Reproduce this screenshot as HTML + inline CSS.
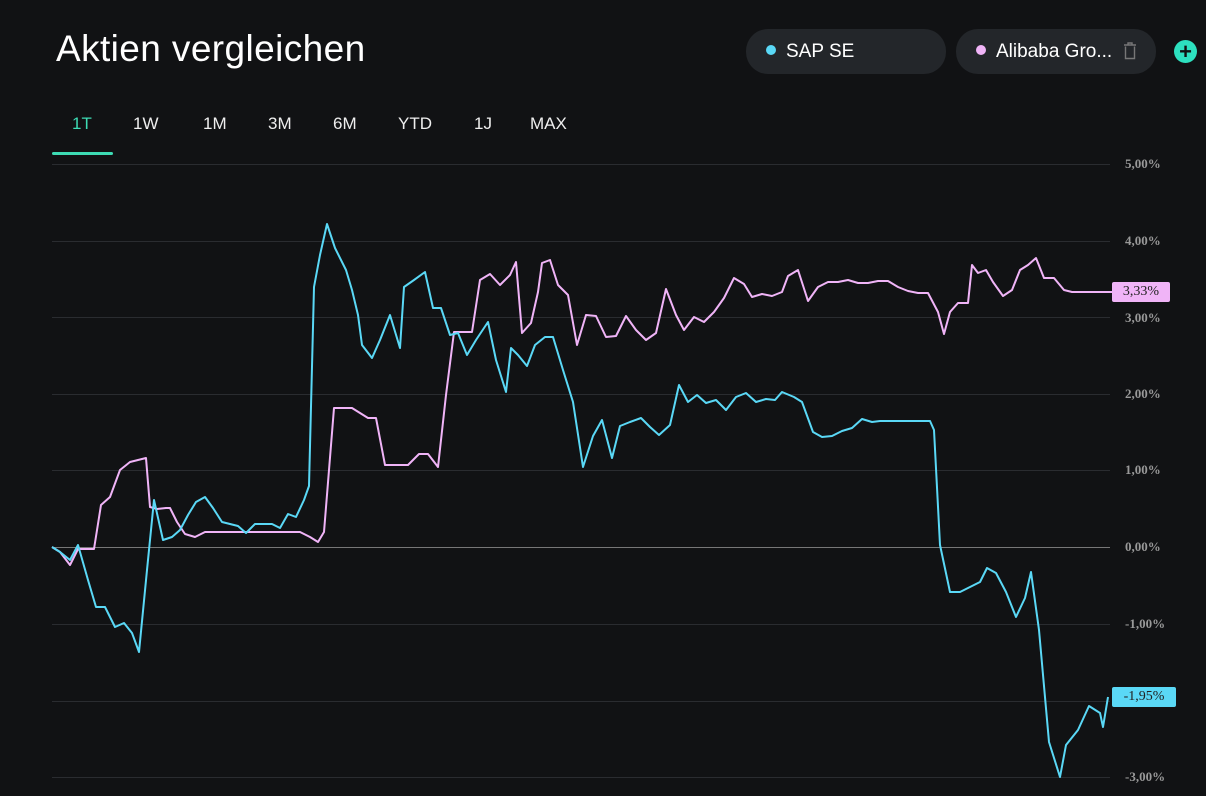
<!DOCTYPE html><html><head><meta charset="utf-8"><style>
body{margin:0;width:1206px;height:796px;background:#111214;overflow:hidden;font-family:"Liberation Sans",sans-serif;color:#fff;position:relative}
.t{position:absolute;left:56px;top:28px;font-size:37px;letter-spacing:0.4px}
.pill{position:absolute;top:29px;height:45px;border-radius:22px;background:#23262a;font-size:19px;line-height:45px}
.dot{display:inline-block;width:10px;height:10px;border-radius:50%;vertical-align:middle;margin:0 10px 3px 20px}
.tab{position:absolute;top:114px;font-size:17px;color:#eee}
.yl{position:absolute;left:1125px;font-family:"Liberation Serif",serif;font-size:13px;color:#999;font-weight:bold}
</style></head><body>
<div class="t">Aktien vergleichen</div>
<div class="pill" style="left:746px;width:200px"><span class="dot" style="background:#5ad8f6"></span>SAP SE</div>
<div class="pill" style="left:956px;width:200px"><span class="dot" style="background:#f0b4f7"></span>Alibaba Gro...<svg width="14" height="18" style="position:absolute;left:167px;top:13px" viewBox="0 0 14 18"><path d="M1 3h12M5 3V1h4v2M2.5 4.5v12h9v-12" fill="none" stroke="#777" stroke-width="1.4"/></svg></div>
<div style="position:absolute;left:1174px;top:40px;width:23px;height:23px;border-radius:50%;background:#2de0bf;color:#111;font-size:22px;font-weight:bold;line-height:23px;text-align:center">+</div>
<div class="tab" style="left:72px;color:#3ddbb4">1T</div>
<div class="tab" style="left:133px">1W</div>
<div class="tab" style="left:203px">1M</div>
<div class="tab" style="left:268px">3M</div>
<div class="tab" style="left:333px">6M</div>
<div class="tab" style="left:398px">YTD</div>
<div class="tab" style="left:474px">1J</div>
<div class="tab" style="left:530px">MAX</div>
<div style="position:absolute;left:52px;top:152px;width:61px;height:3px;background:#3ddbb4;border-radius:2px"></div>
<svg width="1206" height="796" style="position:absolute;left:0;top:0">
<g stroke="#2a2c30" stroke-width="1">
<line x1="52" x2="1110" y1="164.5" y2="164.5"/><line x1="52" x2="1110" y1="241.5" y2="241.5"/><line x1="52" x2="1110" y1="317.5" y2="317.5"/><line x1="52" x2="1110" y1="394.5" y2="394.5"/><line x1="52" x2="1110" y1="470.5" y2="470.5"/><line x1="52" x2="1110" y1="624.5" y2="624.5"/><line x1="52" x2="1110" y1="701.5" y2="701.5"/><line x1="52" x2="1110" y1="777.5" y2="777.5"/>
</g>
<line x1="52" x2="1110" y1="547.5" y2="547.5" stroke="#777"/>
<polyline fill="none" stroke="#f0b4f7" stroke-width="2" stroke-linejoin="round" points="52,547 60,552 70,565 78,549 88,549 94,549 101,505 110,497 120,470 130,462 146,458 150,507 157,509 166,508 170,508 177,522 185,534 195,537 205,532 300,532 310,537 318,542 324,532 334,408 352,408 360,413 368,418 376,418 385,465 408,465 419,454 428,454 438,467 446,395 454,332 462,332 472,332 480,280 490,274 500,285 510,275 516,262 522,333 531,323 538,292 542,263 550,260 558,285 568,295 577,345 586,315 596,316 606,337 616,336 626,316 636,330 646,340 656,333 666,289 676,315 684,330 694,317 704,322 714,312 724,298 734,278 744,284 752,297 762,294 772,296 782,292 788,276 798,270 808,301 818,287 828,282 838,282 848,280 858,283 868,283 878,281 888,281 898,287 908,291 918,293 928,293 938,312 944,334 950,312 958,303 968,303 972,265 978,273 986,270 993,282 1003,296 1012,290 1020,270 1028,265 1036,258 1044,278 1054,278 1064,290 1072,292 1094,292"/>
<polyline fill="none" stroke="#5ad8f6" stroke-width="2" stroke-linejoin="round" points="52,547 60,552 70,560 78,545 88,580 96,607 105,607 115,627 124,623 132,633 139,652 147,570 154,500 163,540 172,537 180,530 188,515 196,502 205,497 213,508 222,522 230,524 238,526 246,533 255,524 263,524 272,524 280,528 288,514 296,517 304,500 309,486 314,287 320,255 327,224 335,248 346,270 352,290 358,315 362,345 372,358 380,340 390,315 400,348 404,287 414,280 425,272 433,308 441,308 450,335 458,333 467,355 476,340 488,322 496,360 506,392 511,348 518,355 527,366 535,345 545,337 553,337 563,370 573,402 583,467 593,436 602,420 612,458 620,426 630,422 641,418 650,427 659,435 670,425 679,385 688,402 697,395 706,403 716,400 726,410 736,397 746,393 756,402 766,399 775,400 782,392 794,397 802,402 813,432 822,437 832,436 842,431 852,428 862,419 872,422 880,421 930,421 934,430 940,545 950,592 960,592 970,587 980,582 987,568 996,573 1006,592 1016,617 1025,598 1031,572 1039,630 1049,742 1060,777 1066,745 1078,730 1089,706 1100,713 1103,727 1108,697"/>
<line x1="1094" x2="1112" y1="292" y2="292" stroke="#f0b4f7" stroke-width="2"/>
</svg>
<div class="yl" style="top:156px">5,00%</div>
<div class="yl" style="top:233px">4,00%</div>
<div class="yl" style="top:310px">3,00%</div>
<div class="yl" style="top:386px">2,00%</div>
<div class="yl" style="top:462px">1,00%</div>
<div class="yl" style="top:539px">0,00%</div>
<div class="yl" style="top:616px">-1,00%</div>
<div class="yl" style="top:769px">-3,00%</div>
<div style="position:absolute;left:1112px;top:282px;width:58px;height:20px;background:#f0b4f7;border-radius:2px;color:#222;font-family:'Liberation Serif',serif;font-size:14px;line-height:20px;text-align:center">3,33%</div>
<div style="position:absolute;left:1112px;top:687px;width:64px;height:20px;background:#5ad8f6;border-radius:2px;color:#222;font-family:'Liberation Serif',serif;font-size:14px;line-height:20px;text-align:center">-1,95%</div>
</body></html>
